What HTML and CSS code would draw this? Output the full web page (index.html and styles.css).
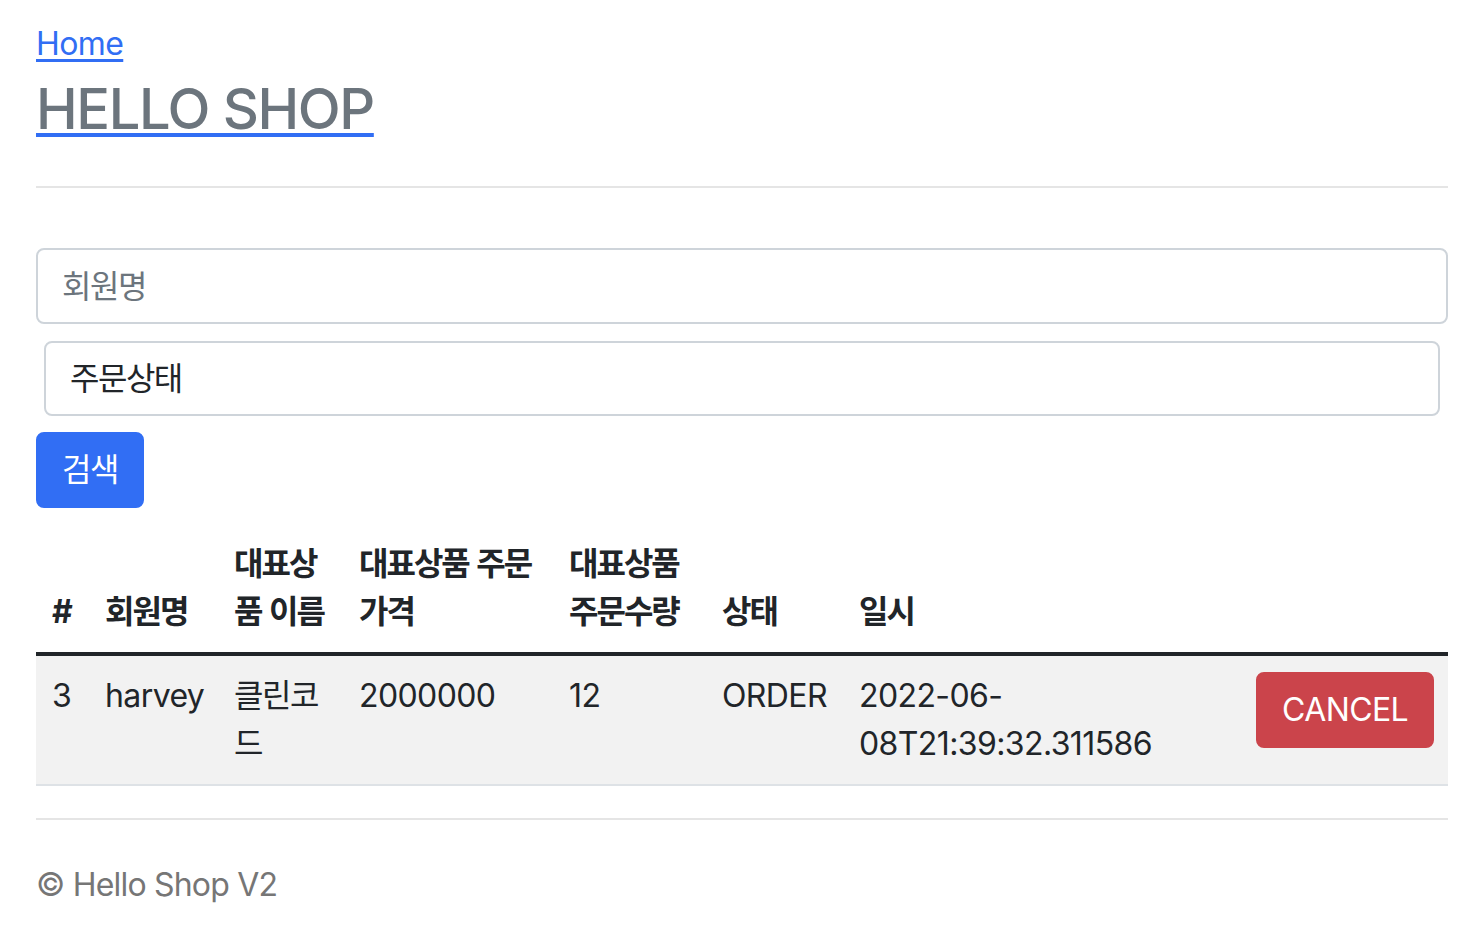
FILE: index.html
```html
<!DOCTYPE html>
<html lang="ko">
<head>
<meta charset="utf-8">
<title>HELLO SHOP</title>
<link rel="stylesheet" href="styles.css">
</head>
<body>
<div class="container">
  <div class="header">
    <a class="home-link" href="#">Home</a>
    <a class="brand-link" href="#"><h3 class="brand">HELLO SHOP</h3></a>
  </div>
  <div class="rule rule-top"></div>
  <form class="search-form">
    <input class="field ko" type="text" placeholder="회원명">
    <div class="select-wrap">
      <select class="field select ko">
        <option>주문상태</option>
      </select>
    </div>
    <button class="btn btn-primary ko" type="button">검색</button>
  </form>
  <table class="orders">
    <colgroup>
      <col class="c-id">
      <col class="c-member">
      <col class="c-item">
      <col class="c-price">
      <col class="c-count">
      <col class="c-status">
      <col class="c-date">
      <col class="c-action">
    </colgroup>
    <thead>
      <tr>
        <th>#</th>
        <th class="ko-b">회원명</th>
        <th class="ko-b">대표상품 이름</th>
        <th class="ko-b">대표상품 주문가격</th>
        <th class="ko-b">대표상품 주문수량</th>
        <th class="ko-b">상태</th>
        <th class="ko-b">일시</th>
        <th></th>
      </tr>
    </thead>
    <tbody>
      <tr>
        <td>3</td>
        <td>harvey</td>
        <td class="ko">클린코드</td>
        <td>2000000</td>
        <td>12</td>
        <td>ORDER</td>
        <td>2022-06-08T21:39:32.311586</td>
        <td class="action"><a class="btn btn-danger" href="#">CANCEL</a></td>
      </tr>
    </tbody>
  </table>
  <div class="rule rule-bottom"></div>
  <div class="footer">© Hello Shop V2</div>
</div>
</body>
</html>
```
FILE: styles.css
```css
* { box-sizing: border-box; }
html, body { margin: 0; padding: 0; background: #fff; }
body {
  font-family: "Inter", "Noto Sans CJK KR", sans-serif;
  font-size: 32px;
  line-height: 48px;
  color: #212529;
  letter-spacing: -0.6px;
}
.container { padding: 20px 36px 0 36px; }
.header { display: flex; flex-direction: column; align-items: flex-start; }
.home-link {
  color: #316ef4;
  text-decoration: underline;
  text-decoration-thickness: 3px;
  text-underline-offset: 4px;
}
.brand-link {
  color: #6c757d;
  text-decoration: underline;
  text-decoration-color: #316ef4;
  text-decoration-thickness: 4px;
  text-underline-offset: 4px;
  margin-top: 8px;
}
.brand {
  margin: 0;
  font-size: 56px;
  line-height: 67px;
  font-weight: 500;
  color: #6c757d;
  letter-spacing: -1.4px;
}
.rule { border-top: 2px solid #e5e5e5; }
.rule-top { margin-top: 43px; }
.search-form { margin-top: 60px; display: flex; flex-direction: column; align-items: flex-start; }
.field {
  display: block;
  width: 100%;
  font: inherit;
  color: #212529;
  background: #fff;
  border: 2px solid #ced4da;
  border-radius: 8px;
  padding: 12px 24px;
  height: 76px;
  outline: none;
}
.field::placeholder { color: #6c757d; }
.ko { letter-spacing: -1.5px; word-spacing: 1.5px; }
.ko-b { letter-spacing: -2px; word-spacing: 2px; }
.select-wrap { width: 100%; padding: 0 8px; margin-top: 17px; }
.select { appearance: none; -webkit-appearance: none; height: 75px; }
.btn {
  display: inline-block;
  font: inherit;
  border: 2px solid transparent;
  border-radius: 8px;
  padding: 12px 24px;
  color: #fff;
  text-decoration: none;
  line-height: 48px;
}
.btn-primary { background: #316ef4; border-color: #316ef4; margin-top: 16px; letter-spacing: -1.5px; }
.btn-danger { background: #cb444b; border-color: #cb444b; }
.orders {
  width: 100%;
  margin-top: 16px;
  border-collapse: collapse;
  table-layout: fixed;
}
.c-id { width: 53px; }
.c-member { width: 129px; }
.c-item { width: 125px; }
.c-price { width: 210px; }
.c-count { width: 153px; }
.c-status { width: 137px; }
.c-date { width: 397px; }
.c-action { width: 208px; }
.orders th, .orders td { padding: 16px; text-align: left; }
.orders th {
  font-weight: 700;
  vertical-align: bottom;
  border-bottom: 4px solid #212529;
}
.orders td {
  vertical-align: top;
  background: #f2f2f2;
  border-bottom: 2px solid #dee2e6;
}
.rule-bottom { margin-top: 32px; }
.footer { margin-top: 41px; color: #767676; letter-spacing: -0.8px; }
```
